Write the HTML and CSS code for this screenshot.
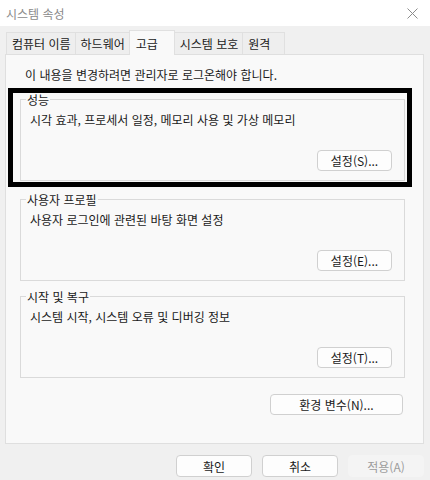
FILE: index.html
```html
<!DOCTYPE html>
<html lang="ko">
<head>
    <meta charset="UTF-8">
    <meta name="viewport" content="width=device-width, initial-scale=1.0">
    <title>시스템 속성</title>
    <link rel="stylesheet" href="styles.css">
</head>
<body>
    <div class="titlebar">
        <span class="title">시스템 속성</span>
        <svg class="close" width="11" height="11" viewBox="0 0 11 11">
            <path d="M0.5 0.5 L10.5 10.5 M10.5 0.5 L0.5 10.5" stroke="#8c8c8c" stroke-width="1" fill="none"/>
        </svg>
    </div>

    <div class="content">
        <div class="tabs">
            <div class="tab">컴퓨터 이름</div>
            <div class="tab">하드웨어</div>
            <div class="tab active">고급</div>
            <div class="tab">시스템 보호</div>
            <div class="tab">원격</div>
        </div>

        <div class="panel">
            <p class="note">이 내용을 변경하려면 관리자로 로그온해야 합니다.</p>

            <div class="group highlighted">
                <span class="legend">성능</span>
                <p class="desc">시각 효과, 프로세서 일정, 메모리 사용 및 가상 메모리</p>
                <div class="group-actions">
                    <button class="btn">설정(S)...</button>
                </div>
                <div class="highlight"></div>
            </div>

            <div class="group profile">
                <span class="legend">사용자 프로필</span>
                <p class="desc">사용자 로그인에 관련된 바탕 화면 설정</p>
                <div class="group-actions">
                    <button class="btn">설정(E)...</button>
                </div>
            </div>

            <div class="group startup">
                <span class="legend">시작 및 복구</span>
                <p class="desc">시스템 시작, 시스템 오류 및 디버깅 정보</p>
                <div class="group-actions">
                    <button class="btn">설정(T)...</button>
                </div>
            </div>

            <div class="panel-actions">
                <button class="btn wide">환경 변수(N)...</button>
            </div>
        </div>

        <div class="dialog-actions">
            <button class="btn dialog">확인</button>
            <button class="btn dialog">취소</button>
            <button class="btn dialog" disabled>적용(A)</button>
        </div>
    </div>
</body>
</html>
```
FILE: styles.css
```css
* {
    box-sizing: border-box;
}

body {
    margin: 0;
    background-color: #f0f0f0;
    font-family: "Noto Sans CJK KR", "Noto Sans", sans-serif;
    font-size: 12px;
    color: #1a1a1a;
}

.titlebar {
    height: 26px;
    background-color: #ffffff;
    display: flex;
    align-items: center;
    justify-content: space-between;
    padding: 0 12px 0 6px;
}

.title {
    color: #8a8a8a;
}

.close {
    display: block;
}

.content {
    padding: 6px 6px 0 5px;
}

/* tab strip */
.tabs {
    display: flex;
    align-items: flex-end;
    height: 22px;
    padding-left: 2px;
}

.tab {
    height: 22px;
    min-width: 43px;
    padding: 0 4px 0 5px;
    display: flex;
    align-items: center;
    background-color: #eeeeee;
    border: 1px solid #e0e0e0;
    border-bottom: none;
    margin-left: -1px;
}

.tab.active {
    height: 25px;
    min-width: 46px;
    padding: 0 12px 0 6px;
    background-color: #f9f9f9;
    margin-bottom: -1px;
    position: relative;
    z-index: 1;
}

.panel {
    height: 390px;
    background-color: #f9f9f9;
    border: 1px solid #dfdfdf;
    padding: 12px 18px 0 14px;
}

.note {
    margin: 0 0 0 5px;
    line-height: 16px;
}

/* group boxes */
.group {
    border: 1px solid #dadada;
    padding: 0 12px 9px 9px;
    position: relative;
}

.group.highlighted {
    margin-top: 16px;
}

.group.profile {
    margin-top: 18px;
}

.group.startup {
    margin-top: 15px;
}

.legend {
    display: block;
    width: fit-content;
    margin: -8px 0 0 -4px;
    padding: 0 1px;
    line-height: 16px;
    background-color: #f9f9f9;
}

.desc {
    margin: 4px 0 0 0;
    line-height: 16px;
}

.group-actions {
    display: flex;
    justify-content: flex-end;
    margin-top: 22px;
}

.highlight {
    position: absolute;
    top: -12px;
    left: -13px;
    right: -8px;
    bottom: -7px;
    border: 5px solid #000000;
    pointer-events: none;
}

.btn {
    width: 75px;
    height: 21px;
    padding: 0;
    background-color: #fdfdfd;
    border: 1px solid #d0d0d0;
    border-radius: 4px;
    font-family: inherit;
    font-size: 12px;
    color: #1a1a1a;
    text-align: center;
    line-height: 19px;
}

.btn.wide {
    width: 133px;
}

.btn:disabled {
    background-color: #f4f4f4;
    border-color: #f4f4f4;
    color: #9c9c9c;
}

.panel-actions {
    display: flex;
    justify-content: flex-end;
    margin: 16px 2px 0 0;
}

.dialog-actions {
    display: flex;
    justify-content: flex-end;
    gap: 10px;
    margin-top: 11px;
}

.btn.dialog {
    width: 76px;
    height: 22px;
}
```
